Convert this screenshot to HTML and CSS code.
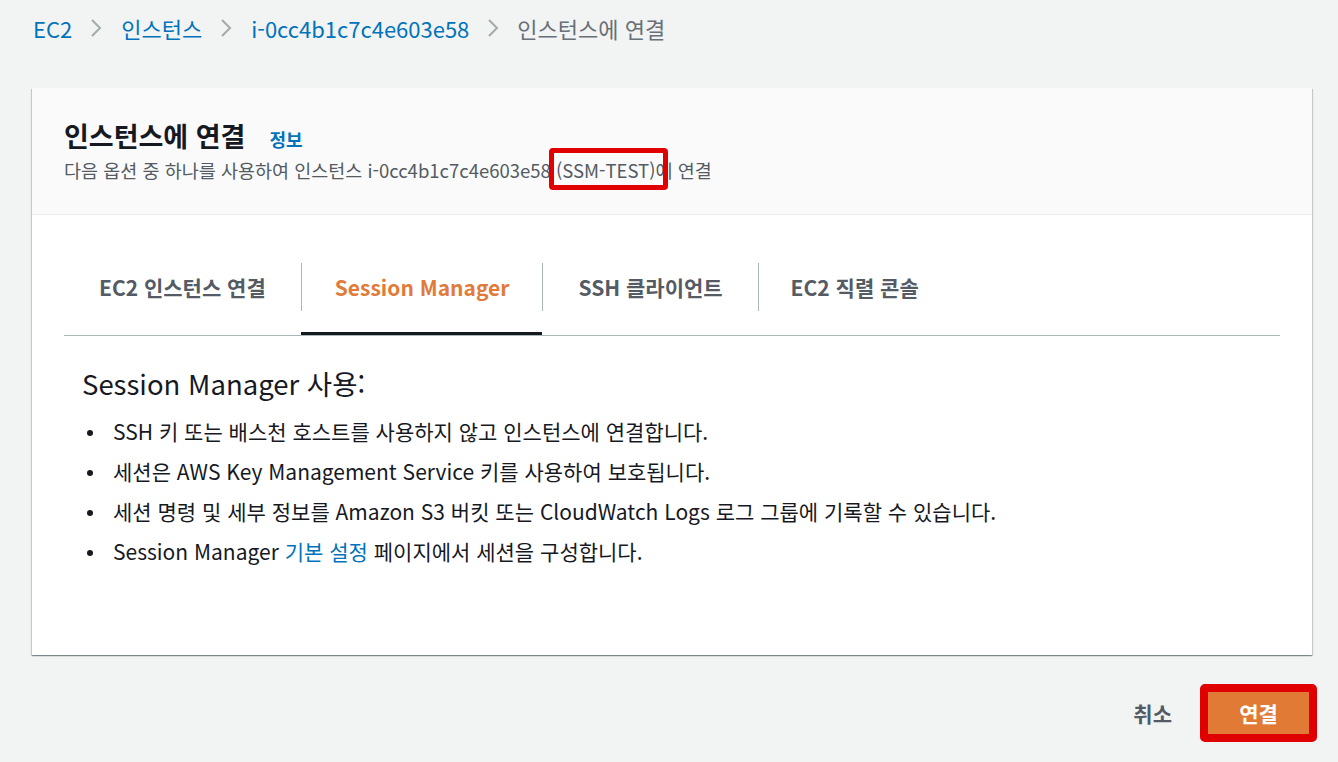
FILE: index.html
```html
<!DOCTYPE html>
<html lang="ko">
<head>
<meta charset="utf-8">
<title>인스턴스에 연결</title>
<link rel="stylesheet" href="styles.css">
</head>
<body>
<div class="page">
  <nav class="crumbs">
    <a class="crumb-link">EC2</a>
    <svg class="chev" viewBox="0 0 14 20"><path d="M3 2 L11 10 L3 18" fill="none" stroke="#a2abab" stroke-width="2"/></svg>
    <a class="crumb-link">인스턴스</a>
    <svg class="chev" viewBox="0 0 14 20"><path d="M3 2 L11 10 L3 18" fill="none" stroke="#a2abab" stroke-width="2"/></svg>
    <a class="crumb-link">i-0cc4b1c7c4e603e58</a>
    <svg class="chev" viewBox="0 0 14 20"><path d="M3 2 L11 10 L3 18" fill="none" stroke="#a2abab" stroke-width="2"/></svg>
    <span class="crumb-current">인스턴스에 연결</span>
  </nav>

  <section class="card">
    <header class="card-head">
      <div class="title-row">
        <h1 class="title">인스턴스에 연결</h1>
        <a class="info">정보</a>
      </div>
      <p class="desc">다음 옵션 중 하나를 사용하여 인스턴스 i-0cc4b1c7c4e603e58 <span class="mark">(SSM-TEST)</span>에 연결</p>
    </header>
    <div class="card-body">
      <div class="tabs">
        <div class="tab"><span class="tab-label">EC2 인스턴스 연결</span></div>
        <div class="tab active"><span class="tab-label sep">Session Manager</span></div>
        <div class="tab"><span class="tab-label sep">SSH 클라이언트</span></div>
        <div class="tab last"><span class="tab-label sep">EC2 직렬 콘솔</span></div>
      </div>
      <div class="panel">
        <h2 class="panel-title">Session Manager 사용:</h2>
        <ul class="list">
          <li>SSH 키 또는 배스천 호스트를 사용하지 않고 인스턴스에 연결합니다.</li>
          <li>세션은 AWS Key Management Service 키를 사용하여 보호됩니다.</li>
          <li>세션 명령 및 세부 정보를 Amazon S3 버킷 또는 CloudWatch Logs 로그 그룹에 기록할 수 있습니다.</li>
          <li>Session Manager <a class="link">기본 설정</a> 페이지에서 세션을 구성합니다.</li>
        </ul>
      </div>
    </div>
  </section>

  <footer class="actions">
    <button class="btn-cancel">취소</button>
    <span class="btn-mark"><button class="btn-primary">연결</button></span>
  </footer>
</div>
</body>
</html>
```

FILE: styles.css
```css
* { box-sizing: border-box; }
html, body { margin: 0; padding: 0; }
body {
  background: #f2f3f3;
  font-family: "Noto Sans CJK KR", "Noto Sans", sans-serif;
  color: #16191f;
  width: 1338px;
  height: 762px;
  overflow: hidden;
}
.page { padding: 0 26px 0 32px; }

.crumbs {
  display: flex;
  align-items: center;
  height: 55px;
  font-size: 22px;
}
.crumb-link { color: #0073bb; padding-left: 1px; }
.crumb-current { color: #687078; }
.chev { width: 14px; height: 20px; margin: 0 17px 0 17px; }

.card {
  margin-top: 33px;
  background: #fff;
  box-shadow: 0 1px 1px 0 rgba(0,28,36,0.3), 1px 1px 1px 0 rgba(0,28,36,0.15), -1px 1px 1px 0 rgba(0,28,36,0.15);
  height: 567px;
}
.card-head {
  background: #fafafa;
  border-bottom: 1px solid #eaeded;
  height: 127px;
  padding: 28px 32px 0 32px;
}
.title-row { display: flex; align-items: baseline; gap: 24px; }
.title { margin: 0; font-size: 27px; font-weight: 700; line-height: 40px; }
.info { color: #0073bb; font-weight: 700; font-size: 18px; }
.desc { margin: 2px 0 0; font-size: 18.5px; color: #545b64; line-height: 24px; }
.mark { position: relative; }
.mark::after {
  content: "";
  position: absolute;
  left: -7px; right: -13px; top: -9px; bottom: -7px;
  border: 5px solid #e00000;
  border-radius: 4px;
}

.card-body { padding: 48px 32px 0 32px; }
.tabs {
  display: flex;
  border-bottom: 1px solid #aab7b8;
}
.tab {
  display: flex;
  flex-direction: column;
  padding-bottom: 24px;
}
.tab-label {
  display: flex;
  align-items: center;
  height: 48px;
  padding: 0 35px;
  font-size: 21px;
  font-weight: 700;
  color: #545b64;
  white-space: nowrap;
}
.tab-label.sep { border-left: 1px solid #aab7b8; }
.tab.active { padding-bottom: 21px; border-bottom: 3px solid #16191f; }
.tab.active .tab-label { padding: 0 33px; color: #e07b39; }
.tab.last .tab-label { padding-left: 32px; }

.panel { padding: 27px 18px 0 18px; }
.panel-title { margin: 0; font-size: 27.5px; font-weight: 400; line-height: 40px; }
.list { margin: 8px 0 0; padding-left: 31px; list-style: none; }
.list li { font-size: 21px; line-height: 40px; }
.list li::before {
  content: "";
  display: inline-block;
  width: 6px;
  height: 6px;
  border-radius: 50%;
  background: #16191f;
  vertical-align: middle;
  margin: 0 20px 3px -26px;
}
.link { color: #0073bb; }

.actions {
  display: flex;
  justify-content: flex-end;
  align-items: center;
  padding-top: 29px;
  gap: 28px;
}
.btn-cancel {
  background: none;
  border: none;
  font-family: inherit;
  font-size: 21px;
  font-weight: 700;
  color: #545b64;
  padding: 0;
}
.btn-mark {
  display: inline-block;
  border: 8px solid #e00000;
  border-radius: 5px;
  margin-right: -5px;
}
.btn-primary {
  display: block;
  width: 101px;
  height: 42px;
  background: #e07a35;
  border: none;
  color: #fff;
  font-family: inherit;
  font-size: 21px;
  font-weight: 700;
  padding: 0;
}
```
